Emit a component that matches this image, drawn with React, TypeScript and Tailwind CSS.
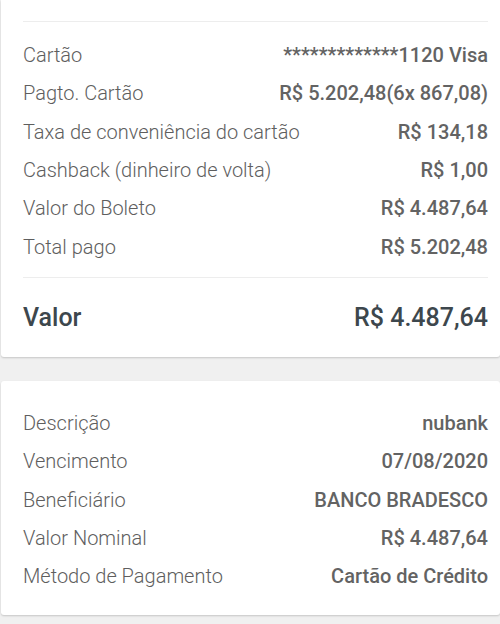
import React from "react";

const rows1: [string, string][] = [
  ["Cartão", "*************1120 Visa"],
  ["Pagto. Cartão", "R$ 5.202,48(6x 867,08)"],
  ["Taxa de conveniência do cartão", "R$ 134,18"],
  ["Cashback (dinheiro de volta)", "R$ 1,00"],
  ["Valor do Boleto", "R$ 4.487,64"],
  ["Total pago", "R$ 5.202,48"],
];

const rows2: [string, string][] = [
  ["Descrição", "nubank"],
  ["Vencimento", "07/08/2020"],
  ["Beneficiário", "BANCO BRADESCO"],
  ["Valor Nominal", "R$ 4.487,64"],
  ["Método de Pagamento", "Cartão de Crédito"],
];

function Row({ label, value }: { label: string; value: string }) {
  return (
    <div className="flex h-[38.3px] items-center justify-between">
      <span className="text-[20px] font-light text-[#5e5e5e]">{label}</span>
      <span className="text-[20px] font-medium text-[#636363]">{value}</span>
    </div>
  );
}

export default function App() {
  return (
    <div
      className="h-[624px] w-[500px] overflow-hidden bg-[#f0f0f0]"
      style={{ fontFamily: "Roboto, 'Noto Sans', sans-serif" }}
    >
      <div className="ml-px rounded-b-[3px] bg-white pl-[22px] pr-[12px] pt-[21px] shadow-[0_1px_2px_rgba(0,0,0,0.18)]">
        <div className="h-px bg-[#ededed]" />
        <div className="pt-[14px]">
          {rows1.map(([l, v]) => (
            <Row key={l} label={l} value={v} />
          ))}
        </div>
        <div className="mt-[11px] h-px bg-[#ededed]" />
        <div className="flex h-[79px] items-center justify-between">
          <span className="text-[25px] font-medium text-[#3d474d]">Valor</span>
          <span className="text-[25px] font-medium text-[#3d474d]">R$ 4.487,64</span>
        </div>
      </div>
      <div className="ml-px mt-[24px] rounded-[3px] bg-white pb-[20px] pl-[22px] pr-[12px] pt-[23px] shadow-[0_1px_2px_rgba(0,0,0,0.18)]">
        {rows2.map(([l, v]) => (
          <Row key={l} label={l} value={v} />
        ))}
      </div>
    </div>
  );
}
